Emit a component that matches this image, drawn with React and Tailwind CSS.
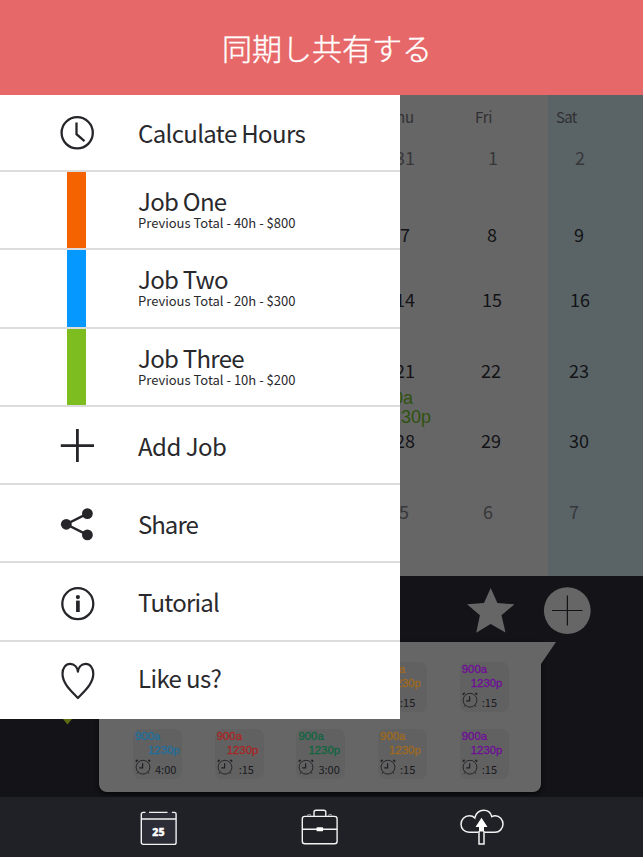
const myriad = "font-['Noto_Sans_CJK_JP',sans-serif]";

const JOBS = [
  { name: "Job One", total: "Previous Total - 40h - $800", bar: "bg-[#f56200]" },
  { name: "Job Two", total: "Previous Total - 20h - $300", bar: "bg-[#0598ff]" },
  { name: "Job Three", total: "Previous Total - 10h - $200", bar: "bg-[#7ebd20]" },
];

const THU = [
  ["31", "pl-[395px]", true],
  ["7", "pl-[400px]", false],
  ["14", "pl-[395px]", false],
  ["21", "pl-[395px]", false],
  ["28", "pl-[395px]", false],
  ["5", "pl-[399px]", true],
];
const FRI = [
  ["1", "pl-[48px]", true],
  ["8", "pl-[47px]", false],
  ["15", "pl-[42px]", false],
  ["22", "pl-[41px]", false],
  ["29", "pl-[41px]", false],
  ["6", "pl-[43px]", true],
];
const SAT = [
  ["2", "pl-[27px]", true],
  ["9", "pl-[26px]", false],
  ["16", "pl-[22px]", false],
  ["23", "pl-[21px]", false],
  ["30", "pl-[21px]", false],
  ["7", "pl-[21px]", true],
];

const SHIFTS = [
  { color: "text-[#1c709e]", end: "pl-[15px]", gap: "ml-[4px]", time: "4:00" },
  { color: "text-[#a82622]", end: "pl-[12px]", gap: "ml-[6px]", time: ":15" },
  { color: "text-[#0f6640]", end: "pl-[12px]", gap: "ml-[4px]", time: "3:00" },
  { color: "text-[#a06a1c]", end: "pl-[11px]", gap: "ml-[4px]", time: ":15" },
  { color: "text-[#700c98]", end: "pl-[11px]", gap: "ml-[4px]", time: ":15" },
];

function DayColumn({ label, labelPad, days, className }) {
  return (
    <div className={`grid grid-rows-[40px_77px_65px_71px_70px_71px_66px] content-start pt-[10px] leading-6 ${className}`}>
      <div className={`text-[15px] text-[#303033] ${labelPad}`}>{label}</div>
      {days.map(([day, pad, muted]) => (
        <div key={day} className={`text-[18px] ${pad} ${muted ? "text-[#37373a]" : "text-[#131317]"}`}>
          {day}
        </div>
      ))}
    </div>
  );
}

function AlarmIcon() {
  return (
    <svg className="h-4 w-4 shrink-0" viewBox="0 0 16 16" fill="none" stroke="#202024" strokeWidth="0.9">
      <circle cx="8" cy="8.2" r="6.9" />
      <path d="M7.6 4.3v4.6H4.2" strokeWidth="1.2" />
      <path d="M.8 2.6 2.6.9M13.4.9l1.8 1.7" strokeWidth="1.5" />
      <path d="m3.2 13.2-1.200 1.600M12.800 13.200l1.200 1.600" />
    </svg>
  );
}

function ShiftTile({ shift }) {
  return (
    <div className="h-[50px] w-[49px] rounded-lg bg-[#616162]">
      <div className={`font-['Liberation_Sans',Arial,sans-serif] text-[11.4px] leading-[14px] [-webkit-text-stroke:0.3px] ${shift.color}`}>
        <div className="pl-[2px]">900a</div>
        <div className={shift.end}>1230p</div>
      </div>
      <div className="flex h-5 items-center pl-[2px]">
        <AlarmIcon />
        <span className={`pt-[3px] text-[11px] leading-4 whitespace-nowrap text-[#1a1a1d] ${shift.gap}`}>{shift.time}</span>
      </div>
    </div>
  );
}

function MenuRow({ icon, label, className, labelClass }) {
  return (
    <div className={`flex items-center border-b-2 border-[#dcdcde] ${className}`}>
      <div className="flex w-[138px] shrink-0 pl-[57px]">{icon}</div>
      <div className={`pt-px text-[24px] leading-8 ${labelClass}`}>{label}</div>
    </div>
  );
}

const iconClass = "h-10 w-10";

const ClockIcon = (
  <svg className={iconClass} viewBox="0 0 40 40" fill="none" stroke="#25252a">
    <circle cx="20.2" cy="19.8" r="15.6" strokeWidth="2.3" />
    <path d="M19.5 9.4v11.8l8 7" strokeWidth="2.3" />
  </svg>
);
const PlusIcon = (
  <svg className={iconClass} viewBox="0 0 40 40" fill="none" stroke="#25252a" strokeWidth="2.8">
    <path d="M20.4 4.1v33M3.8 20.600h33.200" />
  </svg>
);
const ShareIcon = (
  <svg className={iconClass} viewBox="0 0 40 40" fill="#25252a" stroke="#25252a" strokeWidth="2.4">
    <path d="M30.4 10.6 9.300 21.300l21.100 10.600" fill="none" />
    <g stroke="none">
      <circle cx="30.4" cy="10.6" r="5.4" />
      <circle cx="9.3" cy="21.3" r="5.4" />
      <circle cx="30.4" cy="31.9" r="5.4" />
    </g>
  </svg>
);
const InfoIcon = (
  <svg className={iconClass} viewBox="0 0 40 40" fill="none" stroke="#25252a">
    <circle cx="20.8" cy="21.7" r="15.5" strokeWidth="2.3" />
    <circle cx="20.9" cy="15.1" r="2.1" fill="#25252a" stroke="none" />
    <path d="M20.9 18.6V30" strokeWidth="3.7" />
  </svg>
);
const HeartIcon = (
  <svg className={iconClass} viewBox="0 0 40 40" fill="none" stroke="#25252a" strokeWidth="2.2" strokeLinejoin="round">
    <path d="M20.9 38C16 32.4 5.5 24.3 5.5 13.8 5.5 7.9 8.8 3.9 13.1 3.9c4.600 0 7.300 3.700 7.800 7.800.5-4.100 3.200-7.800 7.800-7.800 4.300 0 7.600 4 7.600 9.900 0 10.500-10.500 18.600-15.400 24.200Z" />
  </svg>
);

function Drawer() {
  return (
    <aside className="absolute top-[95px] left-0 z-10 flex h-[624px] w-[400px] flex-col bg-white text-[#29292d]">
      <MenuRow icon={ClockIcon} label="Calculate Hours" className="h-[77px]" labelClass="tracking-[-0.65px]" />
      {JOBS.map((job) => (
        <div key={job.name} className="flex h-[78.3px] border-b-2 border-[#dcdcde]">
          <div className={`ml-[67px] w-[19px] ${job.bar}`} />
          <div className="pt-[13px] pl-[52px]">
            <div className="text-[24px] leading-8 tracking-[-0.7px]">{job.name}</div>
            <div className="-mt-[2px] text-[13px] leading-4">{job.total}</div>
          </div>
        </div>
      ))}
      <MenuRow icon={PlusIcon} label="Add Job" className="h-[78.3px]" labelClass="tracking-[-0.5px]" />
      <MenuRow icon={ShareIcon} label="Share" className="h-[78.3px]" labelClass="tracking-[-1px]" />
      <MenuRow icon={InfoIcon} label="Tutorial" className="h-[78.3px]" labelClass="tracking-[-0.75px]" />
      <div className="flex grow items-center">
        <div className="w-[138px] shrink-0 pl-[57px]">{HeartIcon}</div>
        <div className="pb-[5px] text-[24px] leading-8 tracking-[-0.6px]">Like us?</div>
      </div>
    </aside>
  );
}

function TabBar() {
  return (
    <nav className="flex h-[60px] justify-between bg-[#202126] pr-[139px] pl-[138px] pt-[9px]">
      <svg className="h-11 w-10" viewBox="0 0 40 44" fill="none" stroke="#f2f2f3" strokeWidth="1.4">
        <rect x="3.5" y="6.5" width="34.5" height="32" rx="2" fill="#2c2c37" stroke="none" />
        <path d="M7.5 6.4H5a1.7 1.7 0 0 0-1.7 1.7v28.4A1.9 1.9 0 0 0 5.2 38.4h31a1.900 1.900 0 0 0 1.900-1.900V8.100a1.700 1.700 0 0 0-1.700-1.700h-2.500M11 6.400h18.500M3.300 13h34.800" />
        <text x="20.4" y="30" textAnchor="middle" fill="#fff" stroke="#fff" strokeWidth="0.3" className="font-['Open_Sans',sans-serif] text-[10.5px] font-extrabold">25</text>
      </svg>
      <svg className="h-11 w-11" viewBox="0 0 44 44" fill="none" stroke="#f2f2f3" strokeWidth="1.4">
        <rect x="6.3" y="10.4" width="34.8" height="27.3" rx="2.5" />
        <path d="M6.3 23.2h34.800M18 10.200V6.200a2 2 0 0 1 2-2h7.800a2 2 0 0 1 2 2v4" />
        <path d="M11.2 9.300q2.500-1.500 4 0M32.200 9.300q2.500-1.500 4 0" strokeWidth="0.7" />
        <rect x="20.5" y="21.2" width="6.6" height="4" rx="0.8" fill="#fff" stroke="none" />
      </svg>
      <svg className="h-11 w-[46px]" viewBox="0 0 46 44" fill="none" stroke="#f2f2f3" strokeWidth="1.5">
        <path d="M20.5 26.3H11.200C6.600 26.300 3 22.900 3 18.300S6.600 9.800 11.300 9.800c2.200 0 4.300.8 5.500 2.100C17.500 7.400 21.200 4.200 25.700 4.200s7.200 2.700 8.100 6.400c1-.5 2.100-.8 3.400-.8 4.400 0 7.800 3.800 7.800 8.300s-3.500 8.200-8 8.200H26.500" />
        <path d="M21 25v13h5V25" />
        <path d="m23.500 11.800 6 9.200h-3.500v4.500h-5V21h-3.500Z" fill="#fff" stroke="none" />
      </svg>
    </nav>
  );
}

export default function App() {
  return (
    <div className={`relative flex h-[857px] w-[643px] flex-col overflow-hidden bg-[#131318] ${myriad}`}>
      <header className="flex h-[95px] items-center justify-center bg-[#e76868] pb-[2px] pl-[11px]">
        <h1 className="text-[30px] leading-10 font-light whitespace-nowrap text-white [-webkit-text-stroke:0.4px_white]">同期し共有する</h1>
      </header>

      <main className="flex h-[481px] bg-[#666]">
        <div className="relative w-[440px]">
          <DayColumn label="Thu" labelPad="pl-[387px]" days={THU} className="" />
          <div className="absolute top-[294px] left-[373px] font-['Liberation_Sans',Arial,sans-serif] text-[18px] leading-[19px] text-[#2f5210]">
            <div>900a</div>
            <div className="pl-[8px]">1230p</div>
          </div>
        </div>
        <DayColumn label="Fri" labelPad="pl-[35px] tracking-[-0.3px]" days={FRI} className="w-[108px]" />
        <DayColumn label="Sat" labelPad="pl-[8px] tracking-[-0.7px]" days={SAT} className="grow bg-[#5a6467]" />
      </main>

      <section className="flex h-[221px] flex-col bg-[#131318]">
        <div className="flex h-[66px] items-start justify-end gap-[29px] pt-[11px] pr-[52px]">
          <svg className="h-12 w-12" viewBox="0 0 48 48" fill="#666">
            <path d="m24.700 1 6.700 15.100 17.100 1.200-13 11 4 17.300L24.700 37 10.200 45.800l3.700-17.500L1 17.300l17-1.200Z" />
          </svg>
          <svg className="h-12 w-12" viewBox="0 0 48 48" fill="none">
            <circle cx="24.3" cy="23.6" r="23.4" fill="#666" />
            <path d="M24.4 8.5v30M9 23.500h30.500" stroke="#131318" strokeWidth="1.2" />
          </svg>
        </div>
        <div className="flex h-[150px] pl-[99px]">
          <div className="w-[442px] rounded-b-lg bg-[#666] pt-[20px] pl-[34px] shadow-[0_2px_5px_#08080b]">
            <div className="grid grid-cols-[repeat(5,81.7px)] grid-rows-[50px_50px] gap-y-[17px]">
              <div className="col-span-3" />
              {SHIFTS.slice(3).map((s, i) => <ShiftTile key={`top-${i}`} shift={s} />)}
              {SHIFTS.map((s, i) => <ShiftTile key={`bottom-${i}`} shift={s} />)}
            </div>
          </div>
          <svg className="h-[23px] w-4" viewBox="0 0 16 23" fill="#666">
            <path d="M-1 0h16L0 22h-1Z" />
          </svg>
        </div>
      </section>

      <TabBar />
      <svg className="absolute top-[719px] left-[62px] h-[6px] w-3" viewBox="0 0 12 6" fill="#5c6b14">
        <path d="M1 0h9L5.500 5.500Z" />
      </svg>
      <Drawer />
    </div>
  );
}
